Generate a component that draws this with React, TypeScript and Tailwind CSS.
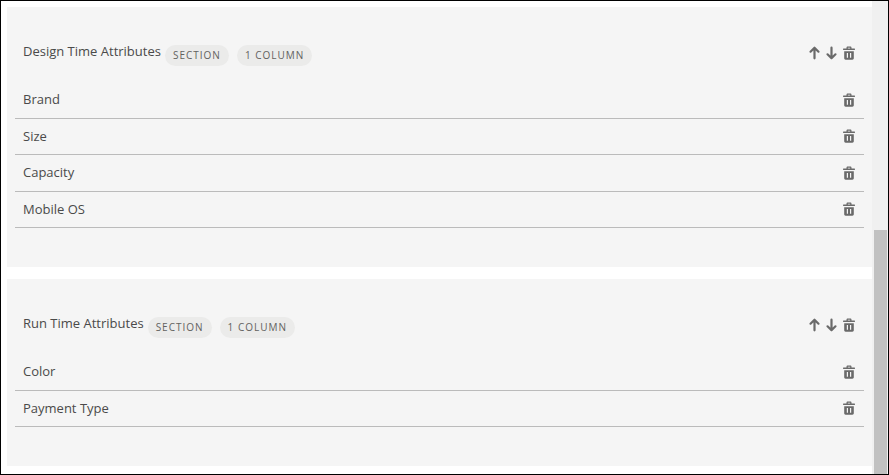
import type { ReactNode } from "react";

type Section = {
  title: string;
  badges: string[];
  attributes: string[];
};

const sections: Section[] = [
  {
    title: "Design Time Attributes",
    badges: ["Section", "1 Column"],
    attributes: ["Brand", "Size", "Capacity", "Mobile OS"],
  },
  {
    title: "Run Time Attributes",
    badges: ["Section", "1 Column"],
    attributes: ["Color", "Payment Type"],
  },
];

function ArrowIcon({ down = false }: { down?: boolean }) {
  return (
    <svg
      viewBox="0 0 13 14"
      className={down ? "h-3.5 w-[13px] rotate-180" : "h-3.5 w-[13px]"}
      fill="none"
      stroke="currentColor"
      strokeWidth="2.2"
      strokeLinecap="round"
      strokeLinejoin="round"
      aria-hidden="true"
    >
      <path d="M6.500 12.300V1.800M2.500 5.700l4-4 4 4" />
    </svg>
  );
}

function TrashIcon() {
  return (
    <svg viewBox="0 0 14 14" className="size-3.5" fill="currentColor" aria-hidden="true">
      <path d="M1.500 2.500h11c.3 0 .5.2.5.5v.5c0 .3-.2.5-.5.5h-11c-.3 0-.5-.2-.5-.5V3c0-.3.200-.5.500-.5z" />
      <path d="M4.500 2.900V1.700C4.500.9 5 .5 5.700.5h2.600c.7 0 1.200.4 1.200 1.200v1.200H8.200V1.700H5.800v1.200z" />
      <path
        fillRule="evenodd"
        d="M2.200 5.300h9.600v7c0 .8-.5 1.400-1.400 1.400H3.600c-.9 0-1.400-.6-1.400-1.400zM4.800 7v4.800h1.200V7zM8 7v4.800h1.200V7z"
      />
    </svg>
  );
}

function IconButton({ label, children }: { label: string; children: ReactNode }) {
  return (
    <button type="button" aria-label={label} className="flex items-center text-[#6a6a6a]">
      {children}
    </button>
  );
}

function SectionCard({ title, badges, attributes }: Section) {
  return (
    <section className="bg-[#f5f5f5] px-2 pb-[39px]">
      <header className="flex items-start justify-between px-2 pt-[35px] pb-4">
        <div className="flex items-start gap-1">
          <h2>{title}</h2>
          <div className="mt-[3px] flex gap-2">
            {badges.map((badge) => (
              <span
                key={badge}
                className="rounded-full bg-[#ebebea] px-2 text-[10px] leading-[21px] tracking-widest text-[#626260] uppercase"
              >
                {badge}
              </span>
            ))}
          </div>
        </div>
        <div className="mt-1 flex gap-1">
          <IconButton label={`Move ${title} up`}>
            <ArrowIcon />
          </IconButton>
          <IconButton label={`Move ${title} down`}>
            <ArrowIcon down />
          </IconButton>
          <IconButton label={`Delete ${title}`}>
            <TrashIcon />
          </IconButton>
        </div>
      </header>
      <ul>
        {attributes.map((attribute) => (
          <li
            key={attribute}
            className="flex items-center justify-between border-b border-[#bbb] px-2 py-2"
          >
            <span>{attribute}</span>
            <IconButton label={`Delete ${attribute}`}>
              <TrashIcon />
            </IconButton>
          </li>
        ))}
      </ul>
    </section>
  );
}

export default function App() {
  return (
    <div className="flex min-h-screen border border-black bg-white font-['Open_Sans','Noto_Sans',sans-serif] text-[13px] leading-normal text-[#4a4a4a]">
      <main className="flex flex-1 flex-col gap-3 py-1.5 pl-1.5">
        {sections.map((section) => (
          <SectionCard key={section.title} {...section} />
        ))}
      </main>
      <div className="flex w-4 flex-col bg-[#f0f0f0] pr-px pl-0.5" aria-hidden="true">
        <div className="basis-[229px]" />
        <div className="flex-1 bg-[#c1c1c1]" />
      </div>
    </div>
  );
}
